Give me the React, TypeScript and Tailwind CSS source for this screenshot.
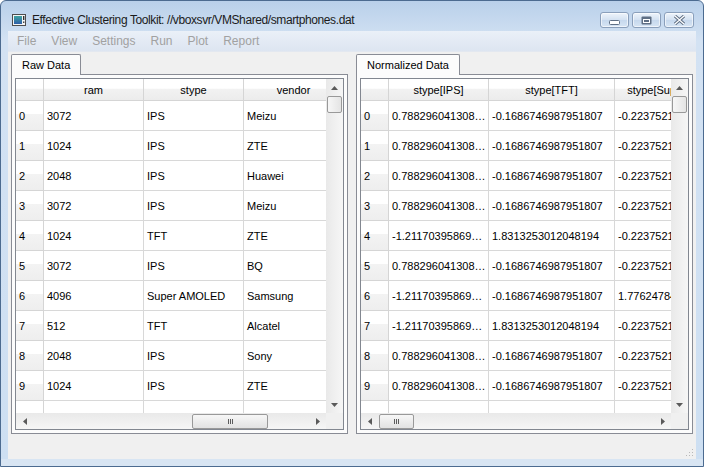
import React from "react"

type Col = { label: string; w: string }

const rawCols: Col[] = [
  { label: "ram", w: "w-[100px]" },
  { label: "stype", w: "w-[100px]" },
  { label: "vendor", w: "w-[100px]" },
]

const rawRows = [
  ["3072", "IPS", "Meizu"],
  ["1024", "IPS", "ZTE"],
  ["2048", "IPS", "Huawei"],
  ["3072", "IPS", "Meizu"],
  ["1024", "TFT", "ZTE"],
  ["3072", "IPS", "BQ"],
  ["4096", "Super AMOLED", "Samsung"],
  ["512", "TFT", "Alcatel"],
  ["2048", "IPS", "Sony"],
  ["1024", "IPS", "ZTE"],
]

const normCols: Col[] = [
  { label: "stype[IPS]", w: "w-[100px]" },
  { label: "stype[TFT]", w: "w-[126px]" },
  { label: "stype[Super AMOLED]", w: "w-[136px]" },
]

const ips = "0.788296041308…"
const notIps = "-1.21170395869…"
const tft0 = "-0.1686746987951807"
const tft1 = "1.8313253012048194"
const sa0 = "-0.22375215146299485"
const sa1 = "1.7762478485370051"

const normRows = [
  [ips, tft0, sa0],
  [ips, tft0, sa0],
  [ips, tft0, sa0],
  [ips, tft0, sa0],
  [notIps, tft1, sa0],
  [ips, tft0, sa0],
  [notIps, tft0, sa1],
  [notIps, tft1, sa0],
  [ips, tft0, sa0],
  [ips, tft0, sa0],
]

const ui = "font-['Liberation_Sans',Arial,sans-serif]"

const Up = () => (
  <svg width="7" height="4" viewBox="0 0 7 4"><path d="M0 4L3.5 0L7 4Z" fill="#5a5a5a" /></svg>
)
const Down = () => (
  <svg width="7" height="4" viewBox="0 0 7 4"><path d="M0 0L3.5 4L7 0Z" fill="#5a5a5a" /></svg>
)
const Left = () => (
  <svg width="4" height="7" viewBox="0 0 4 7"><path d="M4 0L0 3.5L4 7Z" fill="#5a5a5a" /></svg>
)
const Right = () => (
  <svg width="4" height="7" viewBox="0 0 4 7"><path d="M0 0L4 3.5L0 7Z" fill="#5a5a5a" /></svg>
)

function VScroll() {
  return (
    <div className="flex w-[17px] shrink-0 flex-col bg-[linear-gradient(to_right,#e9e9e9,#f6f6f6)]">
      <div className="flex h-[17px] items-center justify-center"><Up /></div>
      <div className="mx-px h-[17px] rounded-[2px] border border-[#999999] bg-[linear-gradient(to_right,#f7f7f7,#e4e4e4)]" />
      <div className="flex-1" />
      <div className="flex h-[17px] items-center justify-center"><Down /></div>
    </div>
  )
}

function HScroll({ thumb }: { thumb: string }) {
  return (
    <div className="flex h-[16px] shrink-0">
      <div className="flex flex-1 items-center bg-[linear-gradient(to_bottom,#e9e9e9,#f6f6f6)]">
        <div className="flex w-[17px] justify-center"><Left /></div>
        <div className={`flex h-[15px] items-center justify-center gap-px rounded-[2px] border border-[#999999] bg-[linear-gradient(to_bottom,#f7f7f7,#e2e2e2)] ${thumb}`}>
          <span className="h-[5px] w-px bg-[#5c5c5c]" />
          <span className="h-[5px] w-px bg-[#5c5c5c]" />
          <span className="h-[5px] w-px bg-[#5c5c5c]" />
        </div>
        <div className="ml-auto flex w-[17px] justify-center"><Right /></div>
      </div>
      <div className="w-[17px] bg-[#f0f0f0]" />
    </div>
  )
}

function Table({ cols, rows, thumb }: { cols: Col[]; rows: string[][]; thumb: string }) {
  return (
    <div className={`flex h-full flex-col border border-[#828790] bg-white text-[11px] text-black ${ui}`}>
      <div className="flex min-h-0 flex-1">
        <div className="min-w-0 flex-1 overflow-hidden whitespace-nowrap">
          <div className="flex h-[22px] border-b border-[#d5d5d5]">
            <div className="w-[28px] shrink-0 border-r border-[#d5d5d5] bg-[linear-gradient(to_bottom,#ffffff_0%,#ffffff_45%,#f2f2f2_46%,#ececec_100%)]" />
            {cols.map((c) => (
              <div
                key={c.label}
                className={`${c.w} flex shrink-0 items-center justify-center border-r border-[#d5d5d5] bg-[linear-gradient(to_bottom,#ffffff_0%,#ffffff_45%,#f2f2f2_46%,#ececec_100%)] pt-px`}
              >
                {c.label}
              </div>
            ))}
          </div>
          {rows.map((r, i) => (
            <div key={i} className="flex h-[30px]">
              <div className="flex w-[28px] shrink-0 items-center border-r border-b border-[#d5d5d5] bg-[linear-gradient(to_bottom,#ffffff_0%,#ffffff_45%,#f3f3f3_46%,#eeeeee_100%)] pt-px pl-[3px]">
                {i}
              </div>
              {r.map((v, j) => (
                <div key={j} className={`${cols[j].w} flex shrink-0 items-center overflow-hidden border-r border-b border-[#d8d8d8] pt-px pl-[3px]`}>
                  {v}
                </div>
              ))}
            </div>
          ))}
          <div className="flex h-[30px]">
            <div className="w-[28px] shrink-0 border-r border-[#d5d5d5] bg-[linear-gradient(to_bottom,#ffffff_0%,#ffffff_45%,#f3f3f3_46%,#eeeeee_100%)]" />
            {cols.map((c) => (
              <div key={c.label} className={`${c.w} shrink-0 border-r border-[#d8d8d8]`} />
            ))}
          </div>
        </div>
        <VScroll />
      </div>
      <HScroll thumb={thumb} />
    </div>
  )
}

function TabPane({ label, children }: { label: string; children: React.ReactNode }) {
  return (
    <div className="flex w-[337px] flex-col">
      <div className="flex h-[20px]">
        <div className={`relative z-10 -mb-px flex h-[21px] items-center rounded-t-[2px] border border-b-0 border-[#898c95] bg-[#fcfcfc] px-[10px] text-[11px] text-black ${ui}`}>
          {label}
        </div>
      </div>
      <div className="h-[360px] border border-[#898c95] bg-[#fcfcfc] p-[3px]">{children}</div>
    </div>
  )
}

function TitleButton({ wide, children }: { wide?: boolean; children: React.ReactNode }) {
  return (
    <div className={`flex h-[16px] ${wide ? "w-[30px]" : "w-[29px]"} items-center justify-center rounded-[3px] border border-[#8a9fbb] bg-[linear-gradient(to_bottom,#eef4fb,#d3e1f1_50%,#c6d8ed_51%,#d7e5f4)] shadow-[inset_0_0_0_1px_rgba(255,255,255,0.6)]`}>
      {children}
    </div>
  )
}

export default function App() {
  return (
    <div className={`flex h-[467px] w-[704px] flex-col overflow-hidden rounded-t-[6px] border border-[#4c6b90] bg-[linear-gradient(to_bottom,#b9d0ea,#d3e2f3_40px,#cddff2)] ${ui}`}>
      {/* title bar */}
      <div className="flex h-[30px] shrink-0 items-start pt-[11px] pl-[11px] pr-[9px]">
        <svg width="14" height="12" viewBox="0 0 14 12" className="mt-[2px]">
          <defs>
            <linearGradient id="ic" x1="0" y1="0" x2="0" y2="1">
              <stop offset="0" stopColor="#3fa3a0" />
              <stop offset="1" stopColor="#2e5fa8" />
            </linearGradient>
          </defs>
          <rect x="0.5" y="0.5" width="13" height="11" fill="#f4f4f4" stroke="#4d4d4d" />
          <rect x="2" y="2" width="8" height="8" fill="url(#ic)" />
          <rect x="11" y="2" width="1.4" height="4" fill="#333" />
          <rect x="11" y="7.5" width="1.4" height="1.4" fill="#333" />
        </svg>
        <span className="ml-[6px] text-[12px] leading-[16px] tracking-[-0.4px] text-[#1b1b1b]">
          Effective Clustering Toolkit: //vboxsvr/VMShared/smartphones.dat
        </span>
        <div className="ml-auto flex gap-[3px]">
          <TitleButton>
            <svg width="11" height="6" viewBox="0 0 11 6" className="mt-[5px]">
              <rect x="0.5" y="0.5" width="10" height="4" rx="1" fill="#fff" stroke="#5f6f84" />
            </svg>
          </TitleButton>
          <TitleButton>
            <svg width="11" height="9" viewBox="0 0 11 9">
              <rect x="0.5" y="0.5" width="10" height="8" rx="1" fill="#5f6f84" />
              <rect x="2" y="3" width="7" height="4" fill="#fff" />
              <rect x="3" y="4" width="5" height="2" fill="#5f6f84" />
            </svg>
          </TitleButton>
          <TitleButton wide>
            <svg width="13" height="10" viewBox="0 0 13 10">
              <path d="M2 1L6.5 5L11 1M2 9L6.5 5L11 9" stroke="#5f6f84" strokeWidth="3.2" fill="none" />
              <path d="M2 1L6.5 5L11 1M2 9L6.5 5L11 9" stroke="#ffffff" strokeWidth="1.3" fill="none" />
            </svg>
          </TitleButton>
        </div>
      </div>

      {/* client */}
      <div className="mx-[7px] flex h-[428px] shrink-0 flex-col bg-[#f0f0f0]">
        <div className="flex h-[21px] items-center gap-[15px] border-b border-[#e3e8f0] bg-[linear-gradient(to_bottom,#eaf0f8,#dde5f1)] pl-[9px] text-[12px] text-[#a1a1a1]">
          <span>File</span>
          <span>View</span>
          <span>Settings</span>
          <span>Run</span>
          <span>Plot</span>
          <span>Report</span>
        </div>
        <div className="mt-[2px] flex gap-[8px] px-[3px]">
          <TabPane label="Raw Data">
            <Table cols={rawCols} rows={rawRows} thumb="ml-[159px] w-[76px]" />
          </TabPane>
          <TabPane label="Normalized Data">
            <Table cols={normCols} rows={normRows} thumb="ml-[1px] w-[35px]" />
          </TabPane>
        </div>
        <div className="flex flex-1 items-end justify-end pr-[2px] pb-[2px]">
          <svg width="8" height="8" viewBox="0 0 8 8">
            <g fill="#b8b8b8">
              <rect x="6" y="0" width="1" height="1" />
              <rect x="3" y="3" width="1" height="1" />
              <rect x="6" y="3" width="1" height="1" />
              <rect x="0" y="6" width="1" height="1" />
              <rect x="3" y="6" width="1" height="1" />
              <rect x="6" y="6" width="1" height="1" />
            </g>
          </svg>
        </div>
      </div>
      <div className="flex-1 bg-[#d8e5f3]" />
    </div>
  )
}
